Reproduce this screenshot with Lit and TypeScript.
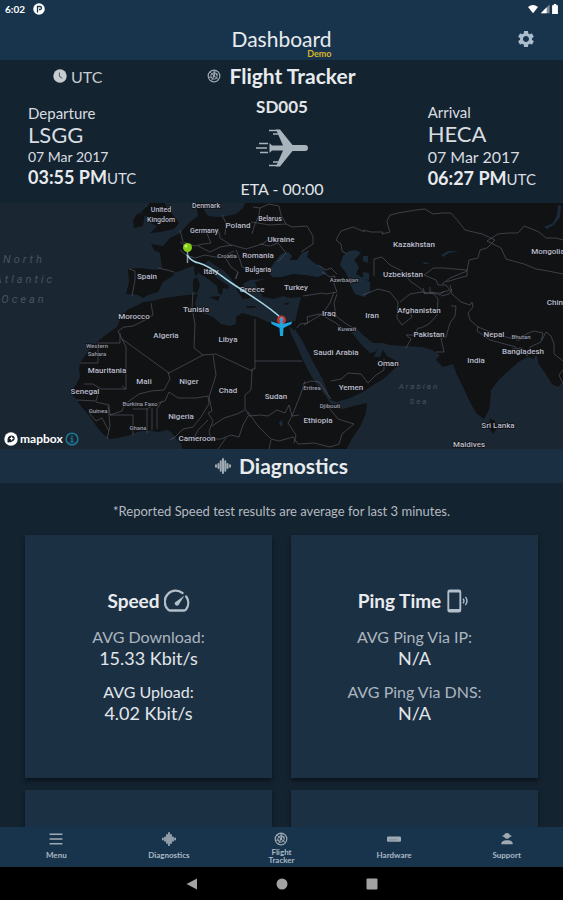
import { LitElement, html, svg, css } from "lit";
import { customElement, property } from "lit/decorators.js";
import { classMap } from "lit/directives/class-map.js";

const globe = svg`
  <circle cx="12" cy="12" r="10" fill="none" stroke="currentColor" stroke-width="2"/>
  <circle cx="12" cy="12" r="5.5" fill="none" stroke="currentColor" stroke-width="1.6"/>
  <path d="M12 12 5 4.8M12 2v10l7.5 6M2.5 14h7M14 3l-2 9M12 12l-4 8" fill="none" stroke="currentColor" stroke-width="1.6"/>
  <circle cx="16.5" cy="9" r="1.8" fill="currentColor"/><circle cx="12" cy="12" r="2" fill="currentColor"/>`;

const ICONS: Record<string, { box: string; art: unknown }> = {
  globe: { box: "0 0 24 24", art: globe },
  clock: {
    box: "0 0 24 24",
    art: svg`<circle cx="12" cy="12" r="11.5" fill="currentColor"/><path d="M11 6v6.5l5 3.5" fill="none" stroke="#5b6770" stroke-width="1.8"/>`,
  },
  pulse: {
    box: "0 0 24 24",
    art: svg`<path d="M1.5 11v2M5.200 9v6M8.600 5v14M12 1.500v21M15.400 5v14M18.800 9v6M22.500 11v2" fill="none" stroke="currentColor" stroke-width="3" stroke-linecap="round"/>`,
  },
  gear: {
    box: "0 0 24 24",
    art: svg`<path fill="currentColor" d="M19.140 12.940c.040-.300.060-.610.060-.940 0-.320-.020-.640-.070-.940l2.030-1.580c.180-.140.230-.410.120-.610l-1.920-3.320c-.120-.220-.370-.290-.590-.220l-2.390.960c-.500-.380-1.030-.700-1.620-.940l-.360-2.540c-.040-.240-.240-.410-.480-.410h-3.840c-.240 0-.430.170-.470.410l-.360 2.540c-.590.240-1.130.570-1.620.940l-2.390-.960c-.220-.080-.470 0-.590.220L2.740 8.870c-.120.210-.080.470.120.610l2.030 1.580c-.050.300-.090.630-.090.940s.020.640.070.940l-2.030 1.580c-.180.140-.230.410-.120.610l1.920 3.320c.120.220.370.290.590.220l2.390-.960c.500.380 1.030.700 1.620.940l.360 2.540c.050.240.240.410.480.410h3.840c.240 0 .440-.170.470-.410l.360-2.540c.590-.240 1.130-.560 1.620-.940l2.390.960c.220.080.470 0 .590-.220l1.920-3.320c.120-.220.070-.470-.120-.610l-2.010-1.580zM12 15.600c-1.980 0-3.600-1.620-3.600-3.600s1.620-3.600 3.600-3.600 3.600 1.620 3.600 3.600-1.620 3.600-3.600 3.600z"/>`,
  },
  plane: {
    box: "0 0 52 40",
    art: svg`<path fill="currentColor" d="M16 17.500h11L20 1.500h4L36.500 17h12.500a3 3 0 0 1 0 6H36.500L24 38.500h-4l7-16H16L13.500 25V15z"/>
      <path d="M13 2.500h9M17 6h7M3 15.500h9M0 20h11M4 24.500h8M17 34h7M13 37.500h9" fill="none" stroke="currentColor" stroke-width="1.600"/>`,
  },
  gauge: {
    box: "0 0 26 22",
    art: svg`<path d="M22.200 6.500A11 11 0 0 1 22 19.500q-.8 1-2 1H6q-1.200 0-2-1A11 11 0 0 1 18.500 3" fill="none" stroke="currentColor" stroke-width="2.300" stroke-linecap="round"/>
      <path d="M20.500 5.500 14.600 15a2.300 2.300 0 0 1-3.700-2.600z" fill="currentColor"/>`,
  },
  phone: {
    box: "0 0 24 26",
    art: svg`<rect x="1.500" y="1.500" width="13" height="23" rx="1.500" fill="none" stroke="currentColor" stroke-width="2"/><path d="M1.500 2.500h13M1.500 23h13" stroke="currentColor" stroke-width="2.500"/>
      <path d="M17.500 10.500q2 2.500 0 5M20 8.500q3.500 4.500 0 9" fill="none" stroke="currentColor" stroke-width="1.500"/>`,
  },
  menu: { box: "0 0 24 24", art: svg`<path d="M1 4h22M1 12h22M1 20h22" stroke="currentColor" stroke-width="2.600"/>` },
  router: {
    box: "0 0 24 24",
    art: svg`<rect x="0" y="7.500" width="24" height="9" rx="2" fill="currentColor"/><path d="M4 13.500h14" stroke="#536d83" stroke-width="1.500" stroke-dasharray="2 1.500"/>`,
  },
  agent: {
    box: "0 0 24 24",
    art: svg`<circle cx="12" cy="6.500" r="5" fill="currentColor"/><path d="M4.500 7h15" stroke="currentColor" stroke-width="2.500"/><path d="M2 21c0-5 4-7 10-7s10 2 10 7z" fill="currentColor"/>`,
  },
  app: {
    box: "0 0 24 24",
    art: svg`<circle cx="12" cy="12" r="11.500" fill="currentColor"/><path d="M9 19V7h5a3 3 0 0 1 0 6h-2" fill="none" stroke="#18344c" stroke-width="2.600"/>`,
  },
  wifi: { box: "0 0 24 24", art: svg`<path d="M12 22 0 7q12-9 24 0z" fill="currentColor"/>` },
  signal: {
    box: "0 0 24 24",
    art: svg`<path d="M23 1v21H2z" fill="currentColor" opacity=".45"/><path d="M16 8v14H2z" fill="currentColor"/>`,
  },
  battery: { box: "0 0 14 24", art: svg`<path d="M4 0h6v3h4v21H0V3h4z" fill="currentColor"/>` },
  back: { box: "0 0 24 24", art: svg`<path d="M22 1v22L1 12z" fill="currentColor"/>` },
  home: { box: "0 0 24 24", art: svg`<circle cx="12" cy="12" r="11" fill="currentColor"/>` },
  recent: { box: "0 0 24 24", art: svg`<rect x="1" y="1" width="22" height="22" rx="2" fill="currentColor"/>` },
  mapbox: {
    box: "0 0 24 24",
    art: svg`<circle cx="12" cy="12" r="11.500" fill="#fff"/><path d="M7 17q-1-10 6-10c4 0 6 4 3 7q-3 3-9 3z" fill="#18222b" stroke="#18222b" stroke-width="2"/><path d="m13 7 1.300 2.800L17 11l-2.700 1.300L13 15l-1.300-2.700L9 11l2.700-1.200z" fill="#fff"/>`,
  },
  info: {
    box: "0 0 24 24",
    art: svg`<circle cx="12" cy="12" r="10" fill="none" stroke="currentColor" stroke-width="2.500"/><path d="M9.500 10.500H12V17M9 17h6M12 6v2.500" fill="none" stroke="currentColor" stroke-width="2.200"/>`,
  },
};

const icon = (name: string, size: string) =>
  html`<svg class="icon ${size}" viewBox=${ICONS[name].box} aria-hidden="true">${ICONS[name].art}</svg>`;

const iconStyles = css`
  .icon { display: block; flex: none; }
  .tiny { width: 10px; height: 10px; }
  .small { width: 12px; height: 12px; }
  .medium { width: 14px; height: 14px; }
  .normal { width: 16px; height: 16px; }
  .large { width: 20px; height: 20px; }
  .wide { width: 26px; height: 24px; }
  .hero { width: 52px; height: 40px; }
  .cell { width: 6px; height: 10px; }
`;

type Label = [text: string, x: number, y: number, size?: string];

const COUNTRIES: Label[] = [
  ["United", 161, 12, "s"], ["Kingdom", 161, 22, "s"], ["Denmark", 206, 8, "s"], ["Germany", 204, 33, "s"],
  ["Poland", 238, 28], ["Belarus", 270, 21, "s"], ["Ukraine", 281, 42], ["Croatia", 227, 58, "t"],
  ["Romania", 258, 58], ["Bulgaria", 258, 72, "s"], ["Italy", 211, 74], ["Greece", 252, 92], ["Turkey", 296, 90],
  ["Azerbaijan", 344, 82, "t"], ["Spain", 147, 79], ["Morocco", 134, 119], ["Tunisia", 196, 112],
  ["Algeria", 166, 138], ["Libya", 228, 142], ["Iraq", 329, 116], ["Iran", 372, 118], ["Kuwait", 347, 131, "t"],
  ["Saudi Arabia", 336, 155], ["Oman", 388, 166], ["Yemen", 351, 190], ["Western", 97, 148, "t"],
  ["Sahara", 97, 156, "t"], ["Mauritania", 107, 173], ["Mali", 144, 184], ["Niger", 189, 184],
  ["Chad", 228, 193], ["Sudan", 276, 199], ["Eritrea", 312, 190, "t"], ["Djibouti", 330, 208, "t"],
  ["Ethiopia", 318, 223], ["Senegal", 85, 194], ["Burkina Faso", 140, 206, "t"], ["Guinea", 98, 213, "t"],
  ["Ghana", 138, 230, "t"], ["Nigeria", 181, 219], ["Cameroon", 197, 241], ["Kazakhstan", 414, 47],
  ["Uzbekistan", 403, 77], ["Afghanistan", 419, 113], ["Pakistan", 429, 137], ["India", 476, 163],
  ["Nepal", 494, 137], ["Bhutan", 521, 139, "t"], ["Bangladesh", 523, 154], ["Mongolia", 548, 54],
  ["China", 557, 105], ["Sri Lanka", 498, 228], ["Maldives", 469, 247],
];

const SEAS: Label[] = [
  ["North", 24, 63, "ocean"], ["Atlantic", 25, 83, "ocean"], ["Ocean", 24, 103, "ocean"],
  ["Arabian", 419, 189, "sea"], ["Sea", 419, 204, "sea"],
];

@customElement("route-map")
class RouteMap extends LitElement {
  static styles = [iconStyles, css`
    :host { display: block; position: relative; background: #1a2733; }
    .map { display: block; width: 100%; height: auto; }
    .land { fill: #101214; }
    .water { fill: #1a2a39; }
    .border { fill: none; stroke: #50535b; stroke-width: .7; stroke-linejoin: round; }
    .label { fill: #bbbccb; stroke: #101214; stroke-width: 1.5; paint-order: stroke; font: 500 8px Roboto, sans-serif; text-anchor: middle; }
    .s { font-size: 7px; }
    .t { font-size: 6px; fill: #9c9eab; }
    .ocean, .sea { stroke: none; fill: #48535d; font: italic 11px Roboto, sans-serif; letter-spacing: 3px; }
    .sea { font-size: 8px; letter-spacing: 2px; }
    .credit { position: absolute; left: 4px; bottom: 3px; display: flex; align-items: center; gap: 2px; color: #fff; font: 700 12px/14px Lato, sans-serif; }
    .credit a { color: inherit; display: flex; align-items: center; gap: 2px; text-decoration: none; }
    .credit button { display: flex; border: 0; padding: 0; background: none; color: #1d7895; }
  `];

  render() {
    const label = ([text, x, y, size = ""]: Label) =>
      svg`<text class="label ${size}" x=${x} y=${y}>${text}</text>`;
    return html`
      <svg class="map" viewBox="0 3 563 246" role="img" aria-label="Flight route from Geneva to Cairo">
        <path class="land" d="M151 44 163 46 170 38 180 33 190 22 198 16 196 3 198 0H203L204 10 208 16 217 17 227 16 236 14 243 8 246 0H563V182L558 187 552 184 545 173 536 160 528 157 520 161 506 173 498 181 491 190 490 203 489 210 484 219 476 213 470 202 463 187 457 175 453 164 443 167 436 160 440 155 432 150 423 147 405 146 390 145 383 143 373 143 363 135 357 129 350 128 352 133 360 143 370 153 375 152 378 147 374 157 380 157 383 150 387 156 400 163 390 173 382 180 373 185 363 192 350 198 337 202 330 200 327 190 323 180 312 160 302 140 296 131 295 122 297 113 301 97 290 98 283 96 274 99 263 97 258 90 255 82 265 79 250 80 243 84 246 91 251 98 243 99 238 92 235 84 229 76 223 70 213 64 208 60 205 64 211 72 218 79 229 86 228 89 223 88 222 95 218 93 217 86 208 79 200 74 193 66 187 68 180 71 173 73 174 75 163 82 158 92 148 95 143 98 138 95 126 94 129 82 128 69 140 68 156 70 162 68 160 53 154 50Z"/>
        <path class="land" d="M138 105 143 102 152 101 164 98 187 95 198 94 195 103 198 112 206 114 213 117 221 124 230 126 236 124 236 117 242 113 257 117 268 122 280 123 290 121 297 122 295 131 289 126 291 134 296 144 303 160 309 172 317 185 325 195 330 203 335 208 343 209 354 206 367 203 366 213 360 227 353 237 346 250H183L181 244 177 240 172 233 168 230 158 232 147 230 137 232 130 235 118 238 110 239 103 234 97 227 90 217 87 213 80 205 77 200 70 192 76 185 80 177 79 169 80 163 87 153 97 142 107 134 117 127 121 118 127 110Z"/>
        <path class="land" d="M141 12l7-6 3-6h12l4 8 7 8 5 7-5 6-14 3-10 1 7-7-5-2 2-6-8-2zM133 20l5-7 7 1-2 12-9 2zM193 80l4-3 3 8-3 8-4-2zM194 69l3-3 1 8-3 2zM490 218l5 3 2 7-4 6-4-6zM209 97l11-1-2 5zM246 106h10l-1 2h-8zM283 104l7-2-3 3z"/>
        <path class="water" d="M268 71 274 63 281 54 288 52 292 56 290 60 297 60 302 53 309 50 307 57 313 62 322 68 327 73 318 77 305 75 293 74 282 77 272 77ZM343 56 349 51 356 50 361 53 354 60 359 67 356 74 363 78 370 82 370 92 364 97 355 94 350 84 346 73 340 65Z"/>
        <path class="water" d="M544 27l9-4 4-8 1-10 3 1-1 11-6 8-7 4zM363 56l5 0 0 7-5-2zM363 72l6 1 0 7-6-1zM424 62l5 1-1 1-5 0zM441 55l7-4 11 0-10 2-6 4zM279 223l2-3 2 4-2 3zM534 157l2 8 2-2-1-7z"/>
        <path class="border" d="M363 30l8 2 12 0-1 2 8-2-2-6-1-5 3-6 8-2 18-3 9-1 8 5 9-1 9 0 7 8 7 9 17 4 13 6-8 8-7 2-2 8-9 2-2 11-17 7-8 6M487 41l11-7 10-1 10 0 6-7 8 3 7 3 7 6 10 0 7 2M487 41l14 7 5 11 18 5 12 5 12 2 15 3"/>
        <path class="border" d="M336 40l5-9 12-4 12 5M336 40l5 4 1 7 5 3M374 76v-17l8-2 8 8 12 6 8 10 10 7 5 6M424 75l7-5 2-2 10 0 24 2 0 6-8 2-13 4M424 75l12 5 2 5 8 0 4 5-10 3-10 0 0-6M423 88l2 6 7-2 8 3 4-4M450 85l2 9 9 8 9 3 2-3 1 5-5 6 2 7 8 7 10 4 10 4 12 3 14 1M363 95l15-6 12 3 8 10-1 16 5 7 10-8-2-5M400 102l10-8 12-2 12 2 4 5-1 16-8 9-8 4-3 0-4 7-8 0 5 4-5 9M441 96l8-2 3-5M451 106l5 0-1 10-5 7-4 14-5 1 3 14-8 0M478 126l-1 5 13 9 26 7M516 140l4 0 6-6 8-3 9 2-2 9-11 5-3 9-5-8-10 1"/>
        <path class="border" d="M542 140l4-8 5 4 3 8 0 10 9 7M563 170l-4 5 4 9"/>
        <path class="border" d="M180 30l3 12 12 4 8-2 8-1-6-14M198 46l12 6 10-5 12-2 14 4 16-5 9-6M218 28l2 10 12 8M222 15l4 8-1 12M252 34l3-10 4-9 1-7 9-4 10 2 2 9 5 9-16 1-19-3M253 7l7 1M286 24l6 3 15-1 6 10 0 8-12 8M260 44l10 2 8-3 8 10-8 9M236 50l4 10 2 7 18 5 12-2M215 57l10 0 6 10 7 5-2 7M226 55l8-4M238 72l-3 7M180 50l6 5 9 3 10-3 10 2M180 42l6 4M158 68l9 2 7 2M132 96l3-16 0-9-6-2M318 65l8 5 5-2 6 6M322 72l8 5 5-1-1 8 3 8-11 2-3-1-20 3M334 92l-4 11-8 11-18 11M297 128l3-4 8-1-1-6 12-3 3 1 14 8 6 5 9 3M337 94l-3 9 2 13 9 7 8 5M368 183l-7-9-13-1-7 6-10 2M368 183l8-8 8-5 0-11"/>
        <path class="border" d="M193 93l-1 15 3 16-1 24 9 7M203 155l-34 18-47-34-4-8 6-4 9-1 12-6 8-5-2-12M120 133v10h-22M122 139l4 8v42h-25l-8-5-9 0M98 142v21H80M126 189l-4-3M99 190l-3 11-19-1M96 202l13 3 1 10 12-4 3-7 14-10 12-3 13-1 6-11-2-7M110 215h20l3 0v20M133 209h14v24M152 208v22M147 209l8-5 10-3 4-9 9 6 8 0 10 0 12-2 1 8-8 13-8 10-10 2-8 8-5 3M157 229l0-20 5-8M108 206l2 20-3 13M89 213l7 8 6-3 7 13M203 155l13-1 36 17V169h3V119M255 161h47M252 170l-1 20-6 5 0 15-8 4-13 4-12 8M213 155l3 20-7 22 3 14-4 2M208 213l5 8-4 10 2 8 10 0 10-4 8 2 4-12 5-9M246 210l3 6 11-1 8 1 9-6 8 3 4-8 3 11 7-1M248 212l10 14 13 13 8 2 14-4 5 7 16-1 16 4 9-3 3-10 12-10-16-5-12-15M305 181l-5 15-8 20-4 7 8 12-2 8M303 184l8-3 8 1 12 17M271 240l-2 9M226 238l-8 11M194 238l4-8 10-10"/>
        ${SEAS.map(label)}
        ${COUNTRIES.map(label)}
        <path d="M187.500 50v13" stroke="#8d949c" stroke-width="1.500"/>
        <path d="M187 55q5 7 12 8c13 4 19 11 31 19 19 13 38 23 52 37" fill="none" stroke="#a5d5e4" stroke-width="1.600"/>
        <circle cx="187.500" cy="47.500" r="4.500" fill="#83cb16"/><circle cx="186" cy="46" r="1.500" fill="#c4f36c"/>
        <circle cx="281.500" cy="120" r="4.500" fill="#c53234"/><circle cx="281.500" cy="119" r="2" fill="#7993aa"/>
        <path d="M280.500 119q1-1 2 0l.5 5 9-2.500-.5 2.500-8 4-.5 8h-3l-.5-8-8-4-.5-2.500 9 2.500z" fill="#1ca5df"/>
      </svg>
      <div class="credit">
        <a href="#mapbox">${icon("mapbox", "medium")}<span>mapbox</span></a>
        <button aria-label="Map information">${icon("info", "medium")}</button>
      </div>
    `;
  }
}

@customElement("airport-info")
class AirportInfo extends LitElement {
  @property() heading = "";
  @property() code = "";
  @property() date = "";
  @property() time = "";
  @property({ type: Boolean, reflect: true }) compact = false;

  static styles = css`
    :host { display: block; white-space: nowrap; color: #d9dde1; }
    p { margin: 0; }
    .heading { font-size: 15px; line-height: 20px; }
    .code { font-size: 22px; line-height: 24px; }
    .date { font-size: 16px; line-height: 22px; }
    :host([compact]) .date { font-size: 14px; line-height: 20px; }
    .time { display: flex; align-items: baseline; font-size: 18px; line-height: 20px; }
    .time b { color: #e8ebee; }
    .zone { font-size: 15px; }
  `;

  render() {
    return html`
      <p class="heading">${this.heading}</p>
      <p class="code">${this.code}</p>
      <p class="date">${this.date}</p>
      <p class="time"><b>${this.time}</b><span class="zone">UTC</span></p>
    `;
  }
}

interface Reading { name: string; value: string; strong?: boolean }
interface Panel { title: string; icon: string; readings: Reading[] }

const PANELS: Panel[] = [
  { title: "Speed", icon: "gauge", readings: [
    { name: "AVG Download:", value: "15.33 Kbit/s" },
    { name: "AVG Upload:", value: "4.02 Kbit/s", strong: true },
  ] },
  { title: "Ping Time", icon: "phone", readings: [
    { name: "AVG Ping Via IP:", value: "N/A" },
    { name: "AVG Ping Via DNS:", value: "N/A" },
  ] },
];

const TABS = [
  { label: "Menu", icon: "menu" },
  { label: "Diagnostics", icon: "pulse" },
  { label: "Flight Tracker", icon: "globe" },
  { label: "Hardware", icon: "router" },
  { label: "Support", icon: "agent" },
];

@customElement("app-root")
class AppRoot extends LitElement {
  static styles = [iconStyles, css`
    :host { display: flex; flex-direction: column; height: 100vh; background: #142330; color: #e8ebee; font-family: Lato, "Open Sans", sans-serif; }
    * { box-sizing: border-box; }
    h1, h2, h3, p, dl, dd { margin: 0; }
    button { border: 0; padding: 0; background: none; color: inherit; font: inherit; }
    .top { flex: none; background: #18344c; }
    .status { display: flex; justify-content: space-between; align-items: center; height: 18px; padding: 0 5px; color: #fff; font-size: 10px; font-weight: 700; }
    .group { display: flex; align-items: center; gap: 2px; }
    .clock { gap: 8px; }
    .title-row { display: grid; grid-template-columns: 1fr auto 1fr; align-items: center; height: 42px; padding: 0 27px; }
    .title { position: relative; grid-column: 2; font-size: 21px; line-height: 22px; font-weight: 400; }
    .demo { position: absolute; right: 0; top: 100%; color: #d9b52d; font-size: 9px; line-height: 8px; font-weight: 700; }
    .settings { justify-self: end; color: #a9bccb; }
    .content { flex: 1; min-height: 0; overflow: auto; scrollbar-width: none; }
    .flight-head { display: grid; grid-template-columns: 1fr auto 1fr; align-items: center; height: 32px; padding: 0 53px; }
    .utc { display: flex; align-items: center; gap: 4px; justify-self: start; font-size: 16px; color: #c5ccd2; }
    .section-title { display: flex; align-items: center; justify-content: center; gap: 8px; font-size: 21px; line-height: 24px; font-weight: 700; }
    .section-title .icon, .nav .icon { color: #a0aab3; }
    .flight { display: grid; grid-template-columns: 1fr auto 1fr; align-items: center; min-height: 111px; padding: 0 27px 4px 28px; }
    .arrival { justify-self: end; }
    .middle { display: flex; flex-direction: column; align-items: center; gap: 11px; padding-top: 4px; font-size: 16px; line-height: 20px; color: #a9b3bb; }
    .number { font-size: 17px; font-weight: 700; color: #e2e5e8; }
    .eta { color: #e2e5e8; }
    .diag-head { background: #1a3042; padding: 5px 0; }
    .note { padding: 18px 16px 14px; text-align: center; font-size: 13px; line-height: 20px; color: #b3bac0; }
    .cards { display: grid; grid-template-columns: 1fr 1fr; gap: 12px 19px; padding: 0 25px 12px; }
    .card { display: flex; flex-direction: column; align-items: center; justify-content: center; min-height: 243px; padding-bottom: 1px; background: #1c3044; box-shadow: 0 3px 4px #0a141d; }
    .card-title { display: flex; align-items: center; gap: 4px; font-size: 19px; line-height: 24px; }
    .card-title .icon { color: #b3bfc9; }
    .reading { padding-top: 12px; text-align: center; }
    .name { font-size: 16px; line-height: 23px; color: #abb5be; }
    .name.strong, .value { color: #e2e6ea; }
    .value { font-size: 18px; line-height: 20px; }
    .nav { flex: none; display: grid; grid-template-columns: repeat(5, 1fr); height: 40px; background: #18344c; }
    .tab { display: flex; flex-direction: column; align-items: center; padding-top: 5px; gap: 5px; color: #a9b8c5; text-decoration: none; font-size: 8px; line-height: 8px; font-weight: 700; text-align: center; }
    .tab.wrap { padding: 5px 36px 0; gap: 2px; }
    .system { flex: none; display: flex; justify-content: center; align-items: center; gap: 78px; height: 33px; background: #000; color: #a3a3a3; }
  `];

  render() {
    return html`
      <header class="top">
        <div class="status">
          <span class="group clock">6:02 ${icon("app", "small")}</span>
          <span class="group">${icon("wifi", "tiny")}${icon("signal", "tiny")}${icon("battery", "cell")}</span>
        </div>
        <div class="title-row">
          <h1 class="title">Dashboard<span class="demo">Demo</span></h1>
          <button class="settings" aria-label="Settings">${icon("gear", "large")}</button>
        </div>
      </header>
      <main class="content">
        <section>
          <div class="flight-head">
            <button class="utc">${icon("clock", "medium")}UTC</button>
            <h2 class="section-title">${icon("globe", "medium")}Flight Tracker</h2>
          </div>
          <div class="flight">
            <airport-info compact heading="Departure" code="LSGG" date="07 Mar 2017" time="03:55 PM"></airport-info>
            <div class="middle">
              <span class="number">SD005</span>
              ${icon("plane", "hero")}
              <span class="eta">ETA - 00:00</span>
            </div>
            <airport-info class="arrival" heading="Arrival" code="HECA" date="07 Mar 2017" time="06:27 PM"></airport-info>
          </div>
          <route-map></route-map>
        </section>
        <section>
          <div class="diag-head"><h2 class="section-title">${icon("pulse", "normal")}Diagnostics</h2></div>
          <p class="note">*Reported Speed test results are average for last 3 minutes.</p>
          <div class="cards">
            ${PANELS.map((panel) => html`
              <article class="card">
                <h3 class="card-title">${panel.title}${icon(panel.icon, "wide")}</h3>
                <dl>${panel.readings.map((r) => html`
                  <div class="reading">
                    <dt class=${classMap({ name: true, strong: !!r.strong })}>${r.name}</dt>
                    <dd class="value">${r.value}</dd>
                  </div>`)}
                </dl>
              </article>`)}
            <article class="card"></article>
            <article class="card"></article>
          </div>
        </section>
      </main>
      <nav class="nav">
        ${TABS.map((tab) => html`
          <a class=${classMap({ tab: true, wrap: tab.label.includes(" ") })} href="#${tab.icon}">${icon(tab.icon, "medium")}<span>${tab.label}</span></a>`)}
      </nav>
      <footer class="system">
        <button aria-label="Back">${icon("back", "small")}</button>
        <button aria-label="Home">${icon("home", "small")}</button>
        <button aria-label="Recent apps">${icon("recent", "small")}</button>
      </footer>
    `;
  }
}
